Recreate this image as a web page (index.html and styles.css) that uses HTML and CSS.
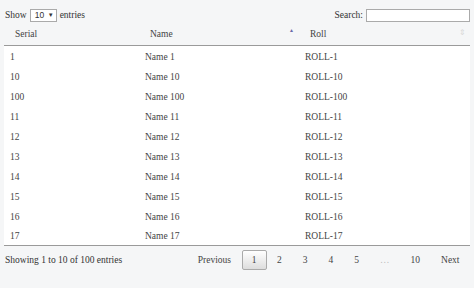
FILE: index.html
```html
<!DOCTYPE html>
<html>
<head>
<meta charset="utf-8">
<link rel="stylesheet" href="styles.css">
</head>
<body>
<div class="wrap">
  <div class="top">
    <label class="len">Show <span class="sel">10<span class="caret">▼</span></span> entries</label>
    <label class="search">Search: <span class="inp"></span></label>
  </div>
  <table class="dt">
    <thead>
      <tr>
        <th class="c1">Serial</th>
        <th class="c2">Name<span class="asc">▲</span></th>
        <th class="c3">Roll<span class="both">⇕</span></th>
      </tr>
    </thead>
    <tbody>
      <tr><td>1</td><td>Name 1</td><td>ROLL-1</td></tr>
      <tr><td>10</td><td>Name 10</td><td>ROLL-10</td></tr>
      <tr><td>100</td><td>Name 100</td><td>ROLL-100</td></tr>
      <tr><td>11</td><td>Name 11</td><td>ROLL-11</td></tr>
      <tr><td>12</td><td>Name 12</td><td>ROLL-12</td></tr>
      <tr><td>13</td><td>Name 13</td><td>ROLL-13</td></tr>
      <tr><td>14</td><td>Name 14</td><td>ROLL-14</td></tr>
      <tr><td>15</td><td>Name 15</td><td>ROLL-15</td></tr>
      <tr><td>16</td><td>Name 16</td><td>ROLL-16</td></tr>
      <tr><td>17</td><td>Name 17</td><td>ROLL-17</td></tr>
    </tbody>
  </table>
  <div class="bottom">
    <div class="info">Showing 1 to 10 of 100 entries</div>
    <div class="pager">
      <span class="pb prev">Previous</span>
      <span class="pb cur">1</span>
      <span class="pb">2</span>
      <span class="pb">3</span>
      <span class="pb">4</span>
      <span class="pb">5</span>
      <span class="pb ell">…</span>
      <span class="pb">10</span>
      <span class="pb next">Next</span>
    </div>
  </div>
</div>
</body>
</html>
```
FILE: styles.css
```css
html, body {
  margin: 0;
  padding: 0;
  background: #f5f6f7;
}
body {
  font-family: "Liberation Serif", "Times New Roman", serif;
  font-size: 9.5px;
  color: #333;
}
.wrap {
  padding: 8px 4px 0 4px;
}
.top {
  display: flex;
  justify-content: space-between;
  align-items: center;
  height: 14px;
}
.len {
  display: flex;
  align-items: center;
  gap: 3px;
  margin-left: 1px;
}
.sel {
  display: inline-flex;
  align-items: center;
  justify-content: space-between;
  box-sizing: border-box;
  width: 27px;
  height: 13px;
  border: 1px solid #aaa;
  background: #fff;
  font-family: "Liberation Sans", Arial, sans-serif;
  font-size: 8.5px;
  padding: 0 2px 0 4px;
}
.caret {
  font-size: 6px;
}
.search {
  display: flex;
  align-items: center;
  gap: 3px;
}
.inp {
  display: inline-block;
  box-sizing: border-box;
  width: 104px;
  height: 13px;
  border: 1px solid #aaa;
  background: #fff;
}
.dt {
  width: 466px;
  border-collapse: collapse;
  margin-top: 1px;
}
.dt th {
  text-align: left;
  font-weight: normal;
  height: 22px;
  padding: 0 0 0 11px;
  box-sizing: border-box;
  border-bottom: 1px solid #9a9a9a;
  position: relative;
  color: #444;
}
.dt th.c1 { width: 135px; }
.dt th.c2 { width: 160px; }
.asc {
  position: absolute;
  right: 5px;
  top: 5px;
  font-size: 5px;
  color: #6a6aa8;
}
.both {
  position: absolute;
  right: 4px;
  top: 5px;
  font-size: 8px;
  color: #d8d8d8;
}
.dt td {
  background: #fff;
  box-sizing: border-box;
  height: 20px;
  padding: 3px 0 0 6px;
  color: #444;
}
.dt tbody tr:last-child td {
  border-bottom: 1px solid #9a9a9a;
}
.bottom {
  display: flex;
  justify-content: space-between;
  align-items: center;
  margin-top: 4px;
}
.info {
  margin-left: 1px;
}
.pager {
  display: flex;
  align-items: center;
  margin-right: 0;
}
.pb {
  display: inline-flex;
  align-items: center;
  justify-content: center;
  box-sizing: border-box;
  height: 20px;
  padding: 0 9.5px;
  color: #444;
  border: 1px solid transparent;
}
.pb.cur {
  border: 1px solid #aaa;
  background: linear-gradient(#fff, #ddd);
  border-radius: 2px;
  width: 25px;
  padding: 0;
}
.pb.ell { color: #bbb; }
```
